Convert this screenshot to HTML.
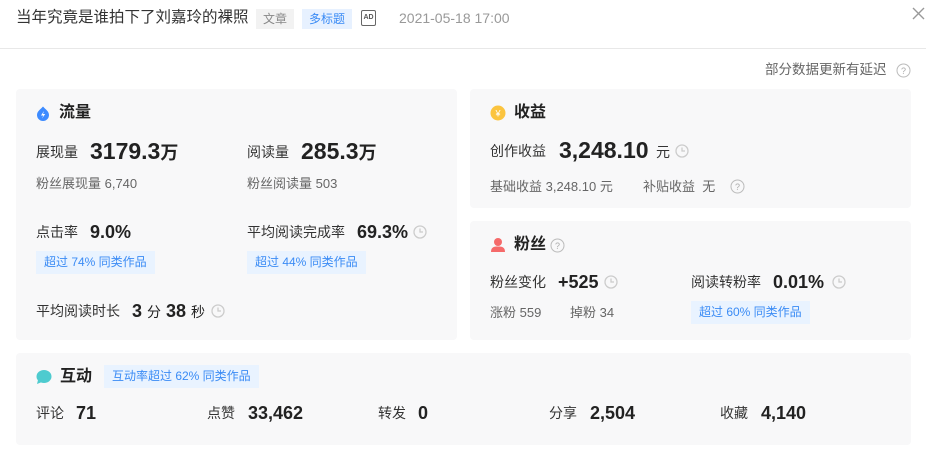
<!DOCTYPE html>
<html><head><meta charset="utf-8"><style>
*{margin:0;padding:0;box-sizing:border-box}
body{width:926px;height:473px;background:#fff;font-family:"Liberation Sans","Noto Sans CJK SC",sans-serif;color:#222;position:relative;overflow:hidden}
.a{position:absolute;white-space:nowrap;line-height:1}
.card{position:absolute;background:#f8f8f9;border-radius:4px}
.l{font-size:14px;color:#333}
.s{font-size:13px;color:#666}
.big{font-size:23px;font-weight:bold;color:#222}
.mid{font-size:18px;font-weight:bold;color:#222}
.t{font-size:16px;font-weight:bold;color:#222}
.badge{position:absolute;background:#e9f3ff;color:#3a8bf5;font-size:12px;height:23px;line-height:23px;padding:0 8px;white-space:nowrap}
.clk{position:absolute;width:14px;height:14px}
</style></head><body>
<div class="a" style="left:16px;top:10px;font-size:15.5px;color:#333">当年究竟是谁拍下了刘嘉玲的裸照</div>
<div class="a" style="left:256px;top:9px;width:38px;height:20px;background:#f2f2f2;color:#888;font-size:12px;line-height:20px;text-align:center">文章</div>
<div class="a" style="left:302px;top:9px;width:50px;height:20px;background:#e7f1ff;color:#3a8bf5;font-size:12px;line-height:20px;text-align:center">多标题</div>
<div class="a" style="left:361px;top:10px;width:15px;height:16px;border:1.5px solid #666;border-radius:2px;font-size:7px;font-weight:bold;color:#555;line-height:13px;text-align:center">AD</div>
<div class="a" style="left:399px;top:11px;font-size:14px;color:#999">2021-05-18 17:00</div>
<svg class="a" style="left:912px;top:7px" width="13" height="13"><path d="M1 1L12 12M12 1L1 12" stroke="#999" stroke-width="1.4"/></svg>
<div class="a" style="left:0;top:48px;width:926px;height:1px;background:#e8e8e8"></div>
<div class="a" style="left:765px;top:63px;font-size:13.5px;color:#666">部分数据更新有延迟</div>
<svg class="a" style="left:896px;top:63px" width="15" height="15"><circle cx="7.5" cy="7.5" r="6.5" fill="none" stroke="#bbb"/><text x="7.5" y="11" font-size="9" text-anchor="middle" fill="#aaa" font-family="Liberation Sans">?</text></svg>

<div class="card" style="left:16px;top:89px;width:441px;height:251px"></div>
<div class="card" style="left:470px;top:89px;width:441px;height:119px"></div>
<div class="card" style="left:470px;top:221px;width:441px;height:119px"></div>
<div class="card" style="left:16px;top:353px;width:895px;height:92px"></div>

<svg class="a" style="left:36px;top:106px" width="14" height="15"><path d="M7 0.5C9 3 13 5 13 9A6 6 0 0 1 1 9C1 5 5 3 7 0.5Z" fill="#3d8bff"/><path d="M8 5L5 9.5H7.3L6 12.5L9.2 8H7Z" fill="#fff"/></svg>
<div class="a t" style="left:59px;top:105px">流量</div>
<div class="a l" style="left:36px;top:145px">展现量</div>
<div class="a big" style="left:90px;top:140px">3179.3<span style="font-size:18px">万</span></div>
<div class="a l" style="left:247px;top:145px">阅读量</div>
<div class="a big" style="left:301px;top:140px">285.3<span style="font-size:18px">万</span></div>
<div class="a s" style="left:36px;top:177px">粉丝展现量 6,740</div>
<div class="a s" style="left:247px;top:177px">粉丝阅读量 503</div>
<div class="a l" style="left:36px;top:225px">点击率</div>
<div class="a mid" style="left:90px;top:223px">9.0%</div>
<div class="a l" style="left:247px;top:225px">平均阅读完成率</div>
<div class="a mid" style="left:357px;top:223px">69.3%</div>
<svg class="clk" style="left:413px;top:225px"><circle cx="7" cy="7" r="6" fill="none" stroke="#ccc" stroke-width="1.3"/><path d="M7 3.5V7H10" fill="none" stroke="#ccc" stroke-width="1.3"/></svg>
<div class="badge" style="left:36px;top:251px">超过 74% 同类作品</div>
<div class="badge" style="left:247px;top:251px">超过 44% 同类作品</div>
<div class="a l" style="left:36px;top:304px">平均阅读时长</div>
<div class="a mid" style="left:132px;top:302px">3 <span style="font-size:14px;font-weight:normal">分</span> 38 <span style="font-size:14px;font-weight:normal">秒</span></div>
<svg class="clk" style="left:211px;top:304px"><circle cx="7" cy="7" r="6" fill="none" stroke="#ccc" stroke-width="1.3"/><path d="M7 3.5V7H10" fill="none" stroke="#ccc" stroke-width="1.3"/></svg>

<svg class="a" style="left:490px;top:105px" width="16" height="16"><circle cx="8" cy="8" r="7.5" fill="#fbc43f"/><text x="8" y="11.5" font-size="9" text-anchor="middle" fill="#fff" font-family="Liberation Sans">¥</text></svg>
<div class="a t" style="left:514px;top:105px">收益</div>
<div class="a l" style="left:490px;top:144px">创作收益</div>
<div class="a big" style="left:559px;top:139px">3,248.10</div>
<div class="a l" style="left:656px;top:145px">元</div>
<svg class="clk" style="left:675px;top:144px"><circle cx="7" cy="7" r="6" fill="none" stroke="#ccc" stroke-width="1.3"/><path d="M7 3.5V7H10" fill="none" stroke="#ccc" stroke-width="1.3"/></svg>
<div class="a s" style="left:490px;top:180px">基础收益 3,248.10 元</div>
<div class="a s" style="left:643px;top:180px">补贴收益 &nbsp;无</div>
<svg class="a" style="left:730px;top:179px" width="15" height="15"><circle cx="7.5" cy="7.5" r="6.5" fill="none" stroke="#bbb"/><text x="7.5" y="11" font-size="9" text-anchor="middle" fill="#aaa" font-family="Liberation Sans">?</text></svg>

<svg class="a" style="left:490px;top:237px" width="16" height="16"><circle cx="8" cy="5" r="4" fill="#f56a6a"/><path d="M1 15C1 10 4 9.5 8 9.5S15 10 15 15Z" fill="#f56a6a"/></svg>
<div class="a t" style="left:514px;top:237px">粉丝</div>
<svg class="a" style="left:550px;top:238px" width="15" height="15"><circle cx="7.5" cy="7.5" r="6.5" fill="none" stroke="#bbb"/><text x="7.5" y="11" font-size="9" text-anchor="middle" fill="#aaa" font-family="Liberation Sans">?</text></svg>
<div class="a l" style="left:490px;top:275px">粉丝变化</div>
<div class="a mid" style="left:558px;top:273px">+525</div>
<svg class="clk" style="left:604px;top:275px"><circle cx="7" cy="7" r="6" fill="none" stroke="#ccc" stroke-width="1.3"/><path d="M7 3.5V7H10" fill="none" stroke="#ccc" stroke-width="1.3"/></svg>
<div class="a l" style="left:691px;top:275px">阅读转粉率</div>
<div class="a mid" style="left:773px;top:273px">0.01%</div>
<svg class="clk" style="left:832px;top:275px"><circle cx="7" cy="7" r="6" fill="none" stroke="#ccc" stroke-width="1.3"/><path d="M7 3.5V7H10" fill="none" stroke="#ccc" stroke-width="1.3"/></svg>
<div class="a s" style="left:490px;top:306px">涨粉 559</div>
<div class="a s" style="left:570px;top:306px">掉粉 34</div>
<div class="badge" style="left:691px;top:301px">超过 60% 同类作品</div>

<svg class="a" style="left:36px;top:369px" width="16" height="16"><ellipse cx="8" cy="7.5" rx="7.5" ry="6.5" fill="#4ecbcf"/><path d="M2 11L1 15L6 13Z" fill="#4ecbcf"/></svg>
<div class="a t" style="left:60px;top:369px">互动</div>
<div class="badge" style="left:104px;top:365px">互动率超过 62% 同类作品</div>
<div class="a l" style="left:36px;top:406px">评论</div>
<div class="a mid" style="left:76px;top:404px">71</div>
<div class="a l" style="left:207px;top:406px">点赞</div>
<div class="a mid" style="left:248px;top:404px">33,462</div>
<div class="a l" style="left:378px;top:406px">转发</div>
<div class="a mid" style="left:418px;top:404px">0</div>
<div class="a l" style="left:549px;top:406px">分享</div>
<div class="a mid" style="left:590px;top:404px">2,504</div>
<div class="a l" style="left:720px;top:406px">收藏</div>
<div class="a mid" style="left:761px;top:404px">4,140</div>
</body></html>
